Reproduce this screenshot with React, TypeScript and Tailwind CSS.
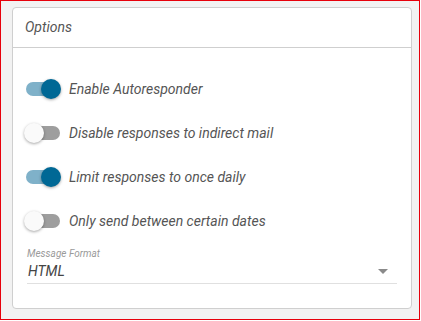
import React from "react";

function Toggle({ on }: { on: boolean }) {
  return (
    <div className="relative w-[38px] h-[20px] shrink-0">
      <div
        className={
          "absolute left-[2px] top-[3px] w-[34px] h-[14px] rounded-full " +
          (on ? "bg-[#7fb1c9]" : "bg-[#9e9e9e]")
        }
      />
      <div
        className={
          "absolute top-0 w-[20px] h-[20px] rounded-full shadow-[0_1px_3px_rgba(0,0,0,0.35)] " +
          (on ? "left-[17px] bg-[#006895]" : "left-0 bg-[#fafafa]")
        }
      />
    </div>
  );
}

function Row({ on, label }: { on: boolean; label: string }) {
  return (
    <div className="h-[44px] flex items-center">
      <div className="ml-[11px]">
        <Toggle on={on} />
      </div>
      <span className="ml-[7px] text-[14px] italic text-[#555]">{label}</span>
    </div>
  );
}

export default function App() {
  return (
    <div
      className="w-[420px] h-[320px] border border-red-600 bg-[#f2f2f2] pt-[6px] pl-[11px]"
      style={{ fontFamily: "Roboto, 'Noto Sans', sans-serif" }}
    >
      <div className="w-[400px] h-[302px] bg-white border border-[#cfcfcf] rounded-[4px] flex flex-col">
        <div className="h-[40px] border-b border-[#cfcfcf] flex items-center pl-[12px]">
          <span className="text-[14px] italic text-[#555]">Options</span>
        </div>
        <div className="pt-[19px] flex flex-col">
          <Row on={true} label="Enable Autoresponder" />
          <Row on={false} label="Disable responses to indirect mail" />
          <Row on={true} label="Limit responses to once daily" />
          <Row on={false} label="Only send between certain dates" />
          <div className="mx-[14px] mt-[5px] border-b border-[#e0e0e0] w-[370px]">
            <div className="text-[10px] italic text-[#9a9a9a] leading-[12px]">Message Format</div>
            <div className="flex items-center justify-between h-[23px] pr-[9px]">
              <span className="text-[14px] italic text-[#444] pl-[1px]">HTML</span>
              <svg width="10" height="5" viewBox="0 0 10 5">
                <path d="M0 0 L10 0 L5 5 Z" fill="#8a8a8a" />
              </svg>
            </div>
          </div>
        </div>
      </div>
    </div>
  );
}
